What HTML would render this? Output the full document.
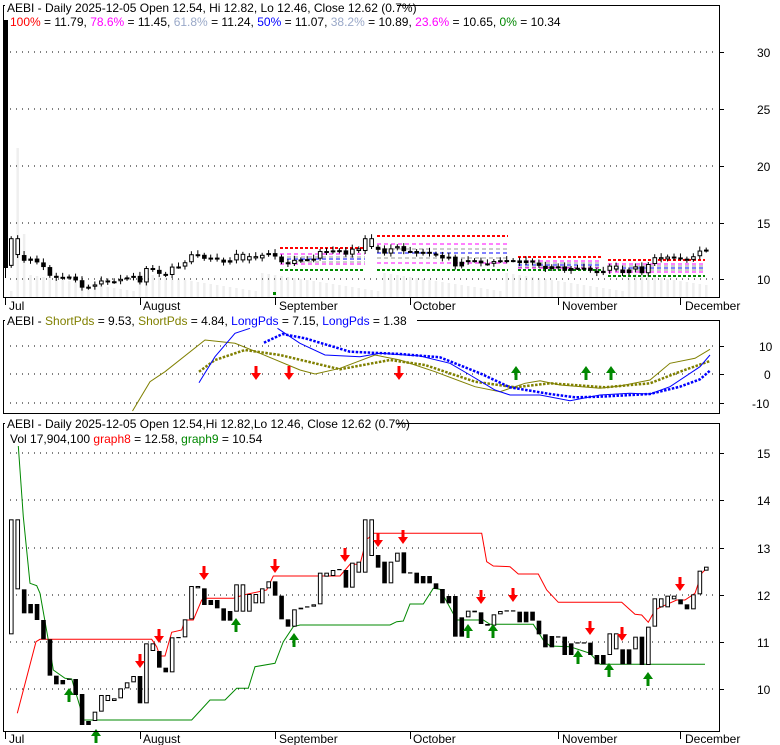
<!DOCTYPE html>
<html><head><meta charset="utf-8"><style>
body{margin:0;background:#fff;width:780px;height:745px;overflow:hidden}
svg{display:block;font-family:"Liberation Sans",Arial,sans-serif;font-size:12px}
</style></head><body>
<svg id="s" width="780" height="745" xmlns="http://www.w3.org/2000/svg">
<rect width="780" height="745" fill="#fff"/>
<g id="vol"></g>
<g id="grid" stroke="#000" stroke-width="1" stroke-dasharray="1,5"></g>
<g id="fib"></g>
<g id="lines" fill="none"></g>
<g id="candles"></g>
<g id="arrows"></g>
<g fill="none" stroke="#000" stroke-width="1">
<rect x="3.5" y="5.5" width="716" height="292"/>
<rect x="3.5" y="320.5" width="716" height="93"/>
<rect x="3.5" y="423.5" width="716" height="308"/>
</g>
<g id="ticks" stroke="#000"></g>
<g fill="#000">
<rect x="5" y="0" width="392" height="14" fill="#fff"/>
<text x="7" y="12">AEBI - Daily 2025-12-05 Open 12.54, Hi 12.82, Lo 12.46, Close 12.62 (0.7%)</text>
<text x="10" y="26"><tspan fill="#f00">100%</tspan> = 11.79, <tspan fill="#f0f">78.6%</tspan> = 11.45, <tspan fill="#99a8c8">61.8%</tspan> = 11.24, <tspan fill="#00f">50%</tspan> = 11.07, <tspan fill="#99a8c8">38.2%</tspan> = 10.89, <tspan fill="#f0f">23.6%</tspan> = 10.65, <tspan fill="#080">0%</tspan> = 10.34</text>
<text x="9" y="310">Jul</text><text x="143" y="310">August</text><text x="279" y="310">September</text><text x="413" y="310">October</text><text x="562" y="310">November</text><text x="685" y="310">December</text>
<rect x="5" y="313" width="412" height="14" fill="#fff"/>
<text x="7" y="325">AEBI - <tspan fill="#808000">ShortPds</tspan> = 9.53, <tspan fill="#808000">ShortPds</tspan> = 4.84, <tspan fill="#00f">LongPds</tspan> = 7.15, <tspan fill="#00f">LongPds</tspan> = 1.38</text>
<rect x="5" y="416" width="392" height="14" fill="#fff"/>
<text x="7" y="428">AEBI - Daily 2025-12-05 Open 12.54,Hi 12.82,Lo 12.46, Close 12.62 (0.7%)</text>
<text x="10" y="443">Vol 17,904,100 <tspan fill="#f00">graph8</tspan> = 12.58, <tspan fill="#080">graph9</tspan> = 10.54</text>
<text x="9" y="743">Jul</text><text x="143" y="743">August</text><text x="279" y="743">September</text><text x="413" y="743">October</text><text x="562" y="743">November</text><text x="685" y="743">December</text>
<text x="757" y="57">30</text><text x="757" y="114">25</text><text x="757" y="171">20</text><text x="757" y="228">15</text><text x="757" y="284">10</text>
<text x="759" y="351">10</text><text x="764" y="379">0</text><text x="752" y="408">-10</text>
<text x="757" y="458">15</text><text x="757" y="505">14</text><text x="757" y="553">13</text><text x="757" y="600">12</text><text x="757" y="647">11</text><text x="757" y="694">10</text>
</g>
</svg>
<script>
var NS="http://www.w3.org/2000/svg";
function el(p,t,a){var e=document.createElementNS(NS,t);for(var k in a)e.setAttribute(k,a[k]);document.getElementById(p).appendChild(e);return e;}
var B=[[298,643,0],[298,508,0],[508,580,1],[552,580,1],[552,600,1],[600,658,1],[658,767,1],[767,793,1],[780,793,1],[776,779,2],[777,825,1],[822,915,1],[903,915,1],[875,903,0],[825,875,0],[825,843,0],[835,843,0],[805,835,0],[787,805,0],[768,787,0],[768,850,1],[670,850,0],[670,693,0],[693,743,1],[743,757,1],[652,757,0],[651,654,2],[598,652,0],[498,598,0],[498,505,0],[505,555,1],[540,555,1],[540,565,1],[565,602,1],[573,602,1],[493,575,0],[493,575,0],[522,575,0],[522,550,0],[505,550,0],[484,505,0],[484,527,1],[527,598,1],[598,620,1],[568,620,0],[563,568,0],[559,562,2],[553,560,0],[458,553,0],[458,470,0],[450,468,0],[447,450,2],[450,503,1],[428,503,0],[425,458,0],[298,458,0],[298,408,0],[405,443,1],[425,490,1],[425,490,0],
[398,425,0],[397,460,1],[457,460,2],[458,490,1],[468,490,1],[468,490,1],[490,507,1],[507,550,1],[528,550,1],[528,650,1],[592,650,1],[572,592,0],[572,577,0],[577,612,1],[612,617,1],[583,617,0],[573,583,0],[571,574,2],[571,574,2],[575,607,1],[575,607,1],[575,602,1],[602,643,1],[643,682,1],[648,682,1],[649,652,2],[650,705,1],[670,705,1],[667,670,2],[667,670,2],[668,705,1],[705,733,1],[705,733,1],[640,705,0],[640,688,0],[688,733,1],[688,733,1],[650,688,0],[650,735,1],[620,735,0],[535,620,0],[535,562,0],[527,562,0],[527,538,0],[538,553,1],[553,568,1],[523,568,0],[452,523,0],[440,452,0]];
var sp=(704-9)/108;
function price(zy){return 10+(689-(420+zy/3))/47.2;}
function ty(p){return 279-(p-10)*11.35;}
for(var i=0;i<B.length;i++){
 var x=9+i*sp, b=B[i], y1=420+b[0]/3, y2=420+b[1]/3;
 var h=Math.max(y2-y1,1);
 if(b[2]==2){el("candles","rect",{x:x,y:y1,width:4.4,height:1.2,fill:"#000"});}
 else el("candles","rect",{x:x+.5,y:y1+.5,width:3.6,height:Math.max(h-1,0.5),fill:b[2]?"#000":"#fff",stroke:"#000","stroke-width":1});
 var p1=price(b[0]),p2=price(b[1]);
 var t1=ty(p1),t2=ty(p2);
 var c=x+2.2;
 el("candles","line",{x1:c,x2:c,y1:t1-2-(i%3),y2:t2+2+(i%2),stroke:"#000","stroke-width":1});
 el("candles","rect",{x:x+.5,y:t1+.5,width:3.6,height:Math.max(t2-t1-1,1),fill:b[2]==1?"#000":"#fff",stroke:"#000"});
 var vh=6+((i*37)%19)+(i==1?125:0)+(i==2?40:0);
 el("vol","rect",{x:x+1,y:297-vh,width:2.5,height:vh,fill:"#efefef"});
}
el("candles","rect",{x:3.5,y:20,width:4.5,height:248,fill:"#000"});
el("candles","line",{x1:5.5,x2:5.5,y1:268,y2:278,stroke:"#000"});
[52,109,166,223,279].forEach(function(y){el("grid","line",{x1:10,x2:718,y1:y,y2:y});el("ticks","line",{x1:719,x2:724,y1:y+.5,y2:y+.5});});
[346,374,403].forEach(function(y){el("grid","line",{x1:10,x2:718,y1:y,y2:y});el("ticks","line",{x1:719,x2:724,y1:y+.5,y2:y+.5});});
[453,500,548,595,642,689].forEach(function(y){el("grid","line",{x1:10,x2:718,y1:y,y2:y});el("ticks","line",{x1:719,x2:724,y1:y+.5,y2:y+.5});});
[5.5,140.5,275.5,410.5,558.5,680.5].forEach(function(x){el("ticks","line",{x1:x,x2:x,y1:297,y2:305});el("ticks","line",{x1:x,x2:x,y1:731,y2:739});});
function seg(x1,x2,ys){var cols=["#f00","#f0f","#999","#00f","#999","#f0f","#080"];
 ys.forEach(function(y,k){var thick=(k==0||k==6);
 el("fib","line",{x1:x1,x2:x2,y1:y,y2:y,stroke:cols[k],"stroke-width":thick?2:1,"stroke-dasharray":thick?"3,2":"4,3"});});}
seg(280,365,[248,254,257,259,262,264,270]);
seg(377,508,[236,244,249,253,258,263,270]);
seg(518,602,[257,261,263,265,267,268,270]);
seg(608,705,[260,264,266,268,270,272,276]);
el("fib","rect",{x:273,y:292,width:3,height:3,fill:"#080"});
function pl(pts,sx,sy,ox,oy,col,w,dash){var s=[];for(var i=0;i<pts.length;i+=2)s.push((ox+pts[i]/sx).toFixed(1)+","+(oy+pts[i+1]/sy).toFixed(1));
 var a={points:s.join(" "),stroke:col,"stroke-width":w,fill:"none"};if(dash)a["stroke-dasharray"]=dash;el("lines","polyline",a);}
pl([265,333,300,245,330,215,410,120,470,130,520,160,600,210,630,222,680,205,750,165,800,180,870,215,950,260,1000,275,1050,250,1080,242,1120,255,1200,265,1240,258,1300,240,1340,190,1390,175,1420,148],2,3,0,300,"#808000",1);
pl([398,215,430,180,490,150,560,165,680,208,780,180,850,195,950,245,1030,262,1100,250,1210,262,1300,250,1360,215,1420,183],2,3,0,300,"#808000",2.5,"2.5,1.5");
pl([398,248,430,170,470,100,500,85],2,3,0,300,"#00f",1);
pl([555,85,600,130,650,165,720,170,760,160,840,168,900,190,940,225,990,270,1020,285,1080,285,1140,302,1200,285,1260,280,1300,282,1340,260,1400,200,1420,165],2,3,0,300,"#00f",1);
pl([528,128,565,102,610,115,700,155,800,162,880,172,960,220,1020,262,1100,282,1150,292,1200,290,1300,282,1360,260,1400,238,1420,212],2,3,0,300,"#00f",2.5,"2.5,1.5");
pl([52,880,108,665,120,658,455,658,470,680,480,708,495,708,515,637,545,630,555,600,580,600,605,540,620,535,700,535,730,525,800,510,820,468,1020,468,1050,433,1080,433,1100,355,1105,355,1120,340,1170,340],3,3,0,420,"#f00",1);
pl([0,340,275,340,290,425,310,438,360,440,385,462,445,462,470,510,505,547,695,547,735,583,755,585,775,607,795,570,815,560,860,540,885,540,915,520,935,460,945,450],3,3,390,420,"#f00",1);
pl([55,78,70,290,90,490,110,497,120,520,145,660,160,750,195,775,215,777,240,860,250,900,575,900,630,840,675,840,710,805,745,805,765,740,825,730,850,665,880,620,900,615,1170,615],3,3,0,420,"#080",1);
pl([0,615,20,605,40,603,60,552,100,552,130,505,150,508,200,600,280,600,300,613,430,613,460,660,480,678,540,680,570,690,600,700,630,733,945,733],3,3,390,420,"#080",1);
function down(x,y){el("arrows","path",{d:"M"+(x-1.5)+" "+y+"h3v7h3.5l-5 7l-5-7h3.5z",fill:"#f00"});}
function up(x,y){el("arrows","path",{d:"M"+x+" "+y+"l5 7h-3.5v7h-3v-7h-3.5z",fill:"#080"});}
[[204,566],[140,654],[159,629],[275,559],[345,548],[378,533],[403,530],[481,590],[513,588],[590,621],[622,627],[680,577],[256,366],[289,366],[399,366]].forEach(function(a){down(a[0],a[1]);});
[[69,688],[96,729],[236,618],[294,633],[468,624],[493,624],[578,650],[609,663],[648,672],[516,366],[586,366],[611,366]].forEach(function(a){up(a[0],a[1]);});
</script>
</body></html>
